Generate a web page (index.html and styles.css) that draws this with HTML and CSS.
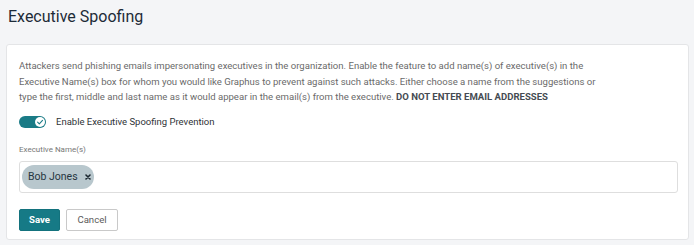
FILE: index.html
```html
<!DOCTYPE html>
<html lang="en">
<head>
    <meta charset="UTF-8">
    <title>Executive Spoofing</title>
    <link rel="stylesheet" href="styles.css">
</head>
<body>

    <!-- title -->
    <h1 class="page-title">Executive Spoofing</h1>

    <!-- settings card -->
    <div class="card">
        <p class="intro">
            Attackers send phishing emails impersonating executives in the organization. Enable the feature to add name(s) of executive(s) in the
            Executive Name(s) box for whom you would like Graphus to prevent against such attacks. Either choose a name from the suggestions or
            type the first, middle and last name as it would appear in the email(s) from the executive. <b>DO NOT ENTER EMAIL ADDRESSES</b>
        </p>

        <label class="toggle-row">
            <span class="toggle">
                <span class="knob">
                    <svg width="8" height="8" viewBox="0 0 8 8"><path d="M1.6 4.2 L3.3 5.8 L6.5 2.4" fill="none" stroke="#1a7b86" stroke-width="1.1" stroke-linecap="round" stroke-linejoin="round"/></svg>
                </span>
            </span>
            <span class="toggle-label">Enable Executive Spoofing Prevention</span>
        </label>

        <div class="field-label">Executive Name(s)</div>
        <div class="tag-input">
            <span class="chip">Bob Jones
                <svg class="chip-x" width="6" height="6" viewBox="0 0 6 6"><path d="M1 1 L5 5 M5 1 L1 5" stroke="#1c2830" stroke-width="1.6" stroke-linecap="round"/></svg>
            </span>
        </div>

        <div class="actions">
            <button class="btn btn-save">Save</button>
            <button class="btn btn-cancel">Cancel</button>
        </div>
    </div>

</body>
</html>
```

FILE: styles.css
```css
body {
    margin: 0;
    padding: 5px 5px 0 6px;
    background: #f4f5f7;
    font-family: Roboto, "Liberation Sans", sans-serif;
}

.page-title {
    margin: 0 0 15px 2px;
    font-size: 16px;
    line-height: 24px;
    font-weight: 400;
    color: #1d2b38;
}

.card {
    background: #fff;
    border: 1px solid #e4e5e7;
    border-radius: 3px;
    padding: 13px 10px 8px 12px;
}

.intro {
    margin: 0;
    max-width: 590px;
    font-size: 9.55px;
    line-height: 15.5px;
    color: #6a6a6a;
}

.intro b {
    color: #454b52;
}

/* toggle */
.toggle-row {
    display: flex;
    align-items: center;
    gap: 10px;
    height: 14px;
    margin-top: 10px;
}

.toggle {
    position: relative;
    width: 27px;
    height: 12px;
    border-radius: 6px;
    background: #1a7b86;
}

.knob {
    position: absolute;
    right: 1px;
    top: 1px;
    width: 10px;
    height: 10px;
    border-radius: 50%;
    background: #fff;
    display: flex;
    align-items: center;
    justify-content: center;
}

.toggle-label {
    font-size: 9.5px;
    color: #2f3337;
}

.field-label {
    margin-top: 16px;
    font-size: 8px;
    line-height: 10px;
    color: #777;
}

/* names box */
.tag-input {
    margin-top: 6px;
    height: 24px;
    padding: 3px 2px;
    border: 1px solid #dedede;
    border-radius: 3px;
    display: flex;
    align-items: center;
}

.chip {
    display: inline-flex;
    align-items: center;
    height: 24px;
    padding: 0 3px 0 6px;
    border-radius: 12px;
    background: #b8c7cd;
    color: #263640;
    font-size: 10.5px;
}

.chip-x {
    margin-left: 7px;
}

/* buttons */
.actions {
    display: flex;
    gap: 6px;
    margin-top: 16px;
}

.btn {
    height: 22px;
    padding: 0;
    font-family: Roboto, "Liberation Sans", sans-serif;
    font-size: 9.6px;
    border-radius: 2px;
    cursor: pointer;
}

.btn-save {
    width: 41px;
    border: 1px solid #13727d;
    background: #167a86;
    color: #fff;
    font-weight: 700;
}

.btn-cancel {
    width: 52px;
    border: 1px solid #c9c9c9;
    background: #fff;
    color: #5b5b5b;
}
```
